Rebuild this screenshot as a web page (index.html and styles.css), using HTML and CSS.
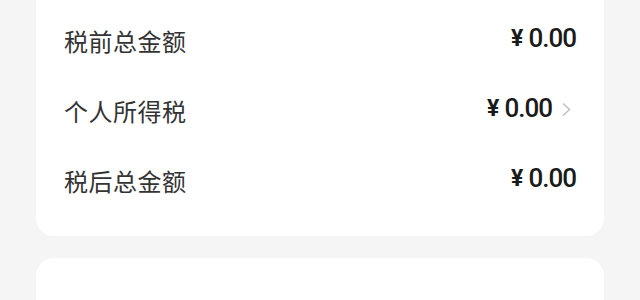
FILE: index.html
```html
<!DOCTYPE html>
<html>
<head>
    <meta charset="UTF-8">
    <title>工资明细</title>
    <link rel="stylesheet" href="styles.css">
</head>
<body>
    <div class="summary-card">
        <div class="summary-row">
            <span class="summary-label">税前总金额</span>
            <span class="summary-value"><b class="yuan">¥</b>0.00</span>
        </div>
        <div class="summary-row">
            <span class="summary-label">个人所得税</span>
            <span class="summary-value"><b class="yuan">¥</b>0.00
                <svg class="arrow" width="11" height="15" viewBox="0 0 11 15">
                    <path d="M2 1.5 L8.5 7.5 L2 13.5" fill="none" stroke="#c2c2c2" stroke-width="1.6"/>
                </svg>
            </span>
        </div>
        <div class="summary-row">
            <span class="summary-label">税后总金额</span>
            <span class="summary-value"><b class="yuan">¥</b>0.00</span>
        </div>
    </div>

    <div class="detail-card"></div>
</body>
</html>
```

FILE: styles.css
```css
* {
    margin: 0;
    padding: 0;
    box-sizing: border-box;
}

body {
    font-family: Roboto, "Noto Sans CJK SC", sans-serif;
    background: #f5f5f5;
    padding: 0 36px;
}

.summary-card {
    background: white;
    border-radius: 0 0 18px 18px;
    padding: 5px 28px 21px;
}

.summary-row {
    display: flex;
    justify-content: space-between;
    align-items: center;
    height: 70px;
}

.summary-label {
    font-family: "Noto Sans CJK SC", sans-serif;
    font-size: 24px;
    color: #333;
    letter-spacing: 0.5px;
}

.summary-value {
    display: flex;
    align-items: center;
    font-size: 26px;
    font-weight: 500;
    color: #1a1a1a;
    letter-spacing: -1px;
    margin-bottom: 4px;
}

.yuan {
    font-weight: 700;
    font-size: 23px;
    margin-right: 6px;
}

.arrow {
    margin-left: 9px;
    margin-right: 4px;
    margin-top: 3px;
}

.detail-card {
    background: white;
    border-radius: 18px;
    margin-top: 22px;
    height: 80px;
}
```
